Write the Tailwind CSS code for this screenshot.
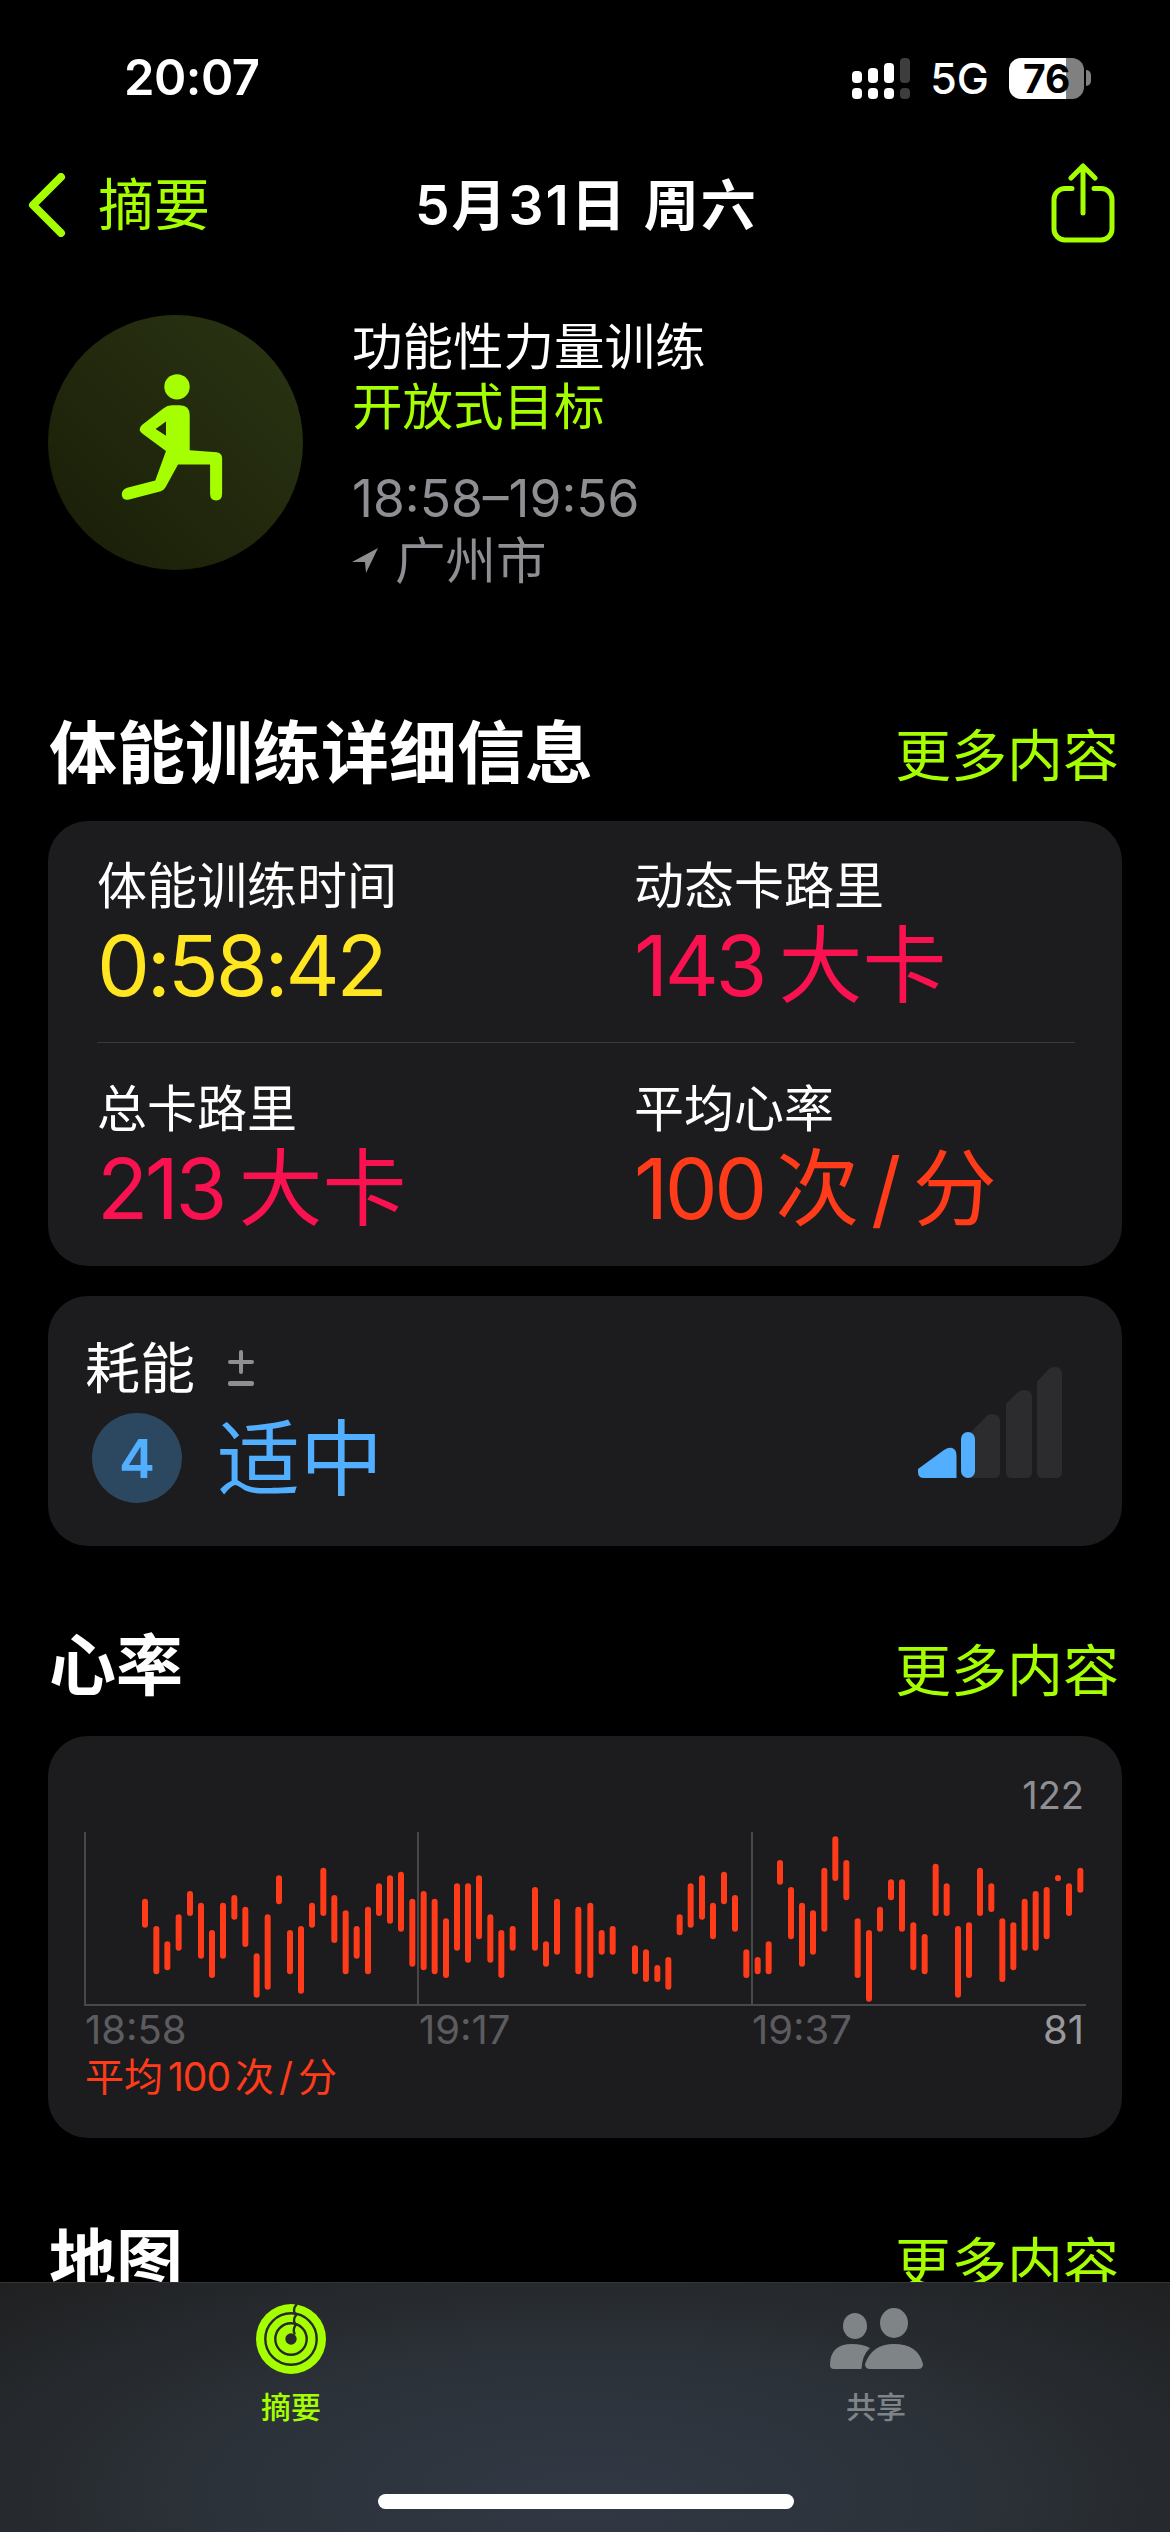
<!DOCTYPE html>
<html lang="zh-CN">
<head>
    <meta charset="UTF-8">
    <meta name="viewport" content="width=device-width, initial-scale=1.0">
    <title>体能训练详细信息</title>
    <script src="https://cdn.jsdelivr.net/npm/@tailwindcss/browser@4"></script>
</head>
<body class="bg-black">
    <div class="relative w-[1170px] h-[2532px] overflow-hidden bg-black text-white font-['Inter','Noto_Sans_CJK_SC',sans-serif]">

        <!-- Status bar -->
        <div class="h-[156px] flex items-center justify-between pl-[124px] pr-[79px]">
            <span class="text-[49px] font-semibold tracking-[-0.5px]">20:07</span>
            <div class="flex items-center">
                <svg width="58" height="41" viewBox="856 57 58 41">
                    <g fill="#fff">
                        <rect x="856" y="70" width="10" height="12" rx="4"/><rect x="856" y="87" width="10" height="11" rx="4"/>
                        <rect x="872" y="67" width="10" height="15" rx="4"/><rect x="872" y="87" width="10" height="11" rx="4"/>
                        <rect x="888" y="62" width="10" height="20" rx="4"/><rect x="888" y="87" width="10" height="11" rx="4"/>
                    </g>
                    <g fill="#3d3d3d">
                        <rect x="904" y="57" width="10" height="25" rx="4"/><rect x="904" y="87" width="10" height="11" rx="4"/>
                    </g>
                </svg>
                <span class="ml-[20px] text-[43px] font-medium leading-none">5G</span>
                <div class="relative ml-[20px] w-[75px] h-[41px] rounded-[12px] bg-[linear-gradient(90deg,#fff_76%,#808080_76%)] text-black text-[39px] font-bold leading-[41px] pl-[14px]">76</div>
                <div class="ml-[2px] w-[5px] h-[16px] rounded-r-full bg-[#808080]"></div>
            </div>
        </div>

        <!-- Nav -->
        <div class="relative h-[98px] flex items-center justify-between pl-[28px] pr-[55px]">
            <div class="flex items-center text-[#a6ff00]">
                <svg width="38" height="64" viewBox="0 0 38 64" fill="none" stroke="#a6ff00" stroke-width="8" stroke-linecap="round" stroke-linejoin="round">
                    <path d="M33 4 L5 32 L33 60"/>
                </svg>
                <span class="ml-[32px] text-[56px] leading-none">摘要</span>
            </div>
            <div class="absolute left-[415px] top-0 h-full flex items-center text-[55px] font-semibold leading-none tracking-[2px]">5月31日 周六</div>
            <svg class="-mt-[4px]" width="64" height="80" viewBox="0 0 64 80" fill="none" stroke="#a6ff00" stroke-width="5" stroke-linecap="round" stroke-linejoin="round">
                <path d="M21 25.5 H14 a11 11 0 0 0 -11 11 V66 a11 11 0 0 0 11 11 H50 a11 11 0 0 0 11 -11 V36.5 a11 11 0 0 0 -11 -11 H43"/>
                <path d="M32 3 V50 M20 15 L32 3 L44 15"/>
            </svg>
        </div>

        <!-- Workout summary -->
        <div class="mt-[61px] ml-[48px] h-[255px] flex items-start">
            <div class="w-[255px] h-[255px] rounded-full bg-linear-to-tr from-[#191e07] to-[#2b3414] flex items-center justify-center">
                <svg width="255" height="255" viewBox="25 45 763 763">
                    <circle cx="411" cy="260" r="38" fill="#a6ff00"/>
                    <path fill="#a6ff00" fill-rule="evenodd" d="M395 315 H420 Q449 315 449 345 V450 L530 456 Q546 458 546 475 V580 Q546 600 528 600 Q510 600 510 580 V492 H414 L378 558 Q372 570 360 573 L268 597 Q250 602 246 585 Q244 568 262 562 L346 540 L378 452 L308 400 Q292 388 306 374 L370 325 Q382 315 395 315 Z M378 364 L347 386 L378 406 Z"/>
                </svg>
            </div>
            <div class="ml-[49px] pt-[2px] text-[50.5px] leading-[60px]">
                <div>功能性力量训练</div>
                <div class="text-[#a6ff00]">开放式目标</div>
                <div class="mt-[31px] text-[#8e8e93] text-[51.5px] leading-[61px]">18:58–19:56</div>
                <div class="mt-[1px] flex items-center text-[#8e8e93] leading-[61px]">
                    <svg width="26" height="26" viewBox="0 0 26 26" fill="#8e8e93"><path d="M26 0 L0 14 H13 L14 25 Z"/></svg>
                    <span class="ml-[17px]">广州市</span>
                </div>
            </div>
        </div>

        <!-- 体能训练详细信息 -->
        <div class="mt-[133px] h-[100px] flex items-center justify-between pl-[49px] pr-[51px]">
            <h2 class="text-[68px] font-bold">体能训练详细信息</h2>
            <span class="text-[56px] text-[#a6ff00] mt-[6px]">更多内容</span>
        </div>

        <div class="mt-[18px] mx-[48px] h-[445px] rounded-[40px] bg-[#1c1c1e] pl-[49px] pr-[47px] pt-[35px]">
            <div class="grid grid-cols-[537px_1fr] h-[186px]">
                <div>
                    <div class="text-[50px] leading-[60px]">体能训练时间</div>
                    <div class="text-[84px] leading-[100px] text-[#ffe620] tracking-[-3.2px]">0:58:42</div>
                </div>
                <div>
                    <div class="text-[50px] leading-[60px]">动态卡路里</div>
                    <div class="text-[84px] leading-[100px] text-[#fa114f] [word-spacing:-9px]"><span class="tracking-[-3.5px]">143</span> 大卡</div>
                </div>
            </div>
            <div class="h-px bg-[#3a3a3c]"></div>
            <div class="grid grid-cols-[537px_1fr] pt-[36px]">
                <div>
                    <div class="text-[50px] leading-[60px]">总卡路里</div>
                    <div class="text-[84px] leading-[100px] text-[#fa114f] [word-spacing:-9px]"><span class="tracking-[-3.5px]">213</span> 大卡</div>
                </div>
                <div>
                    <div class="text-[50px] leading-[60px]">平均心率</div>
                    <div class="text-[84px] leading-[100px] text-[#ff3b1a] [word-spacing:-12px]"><span class="tracking-[-3.5px]">100</span> 次 / 分</div>
                </div>
            </div>
        </div>

        <!-- 耗能 -->
        <div class="mt-[30px] mx-[48px] h-[250px] rounded-[40px] bg-[#1c1c1e] flex items-start justify-between pl-[37px] pr-[60px] pt-[42px]">
            <div>
                <div class="flex items-center h-[60px]">
                    <span class="text-[55px] leading-[60px]">耗能</span>
                    <svg class="ml-[32px]" width="28" height="36" viewBox="0 0 28 36" fill="#8e8e93">
                        <rect x="12" y="0" width="4" height="24" rx="2"/>
                        <rect x="1" y="10" width="26" height="4" rx="2"/>
                        <rect x="1" y="31" width="26" height="5" rx="2"/>
                    </svg>
                </div>
                <div class="mt-[15px] ml-[7px] flex items-center">
                    <div class="w-[90px] h-[90px] rounded-full bg-[#2c4760] flex items-center justify-center text-[54px] font-semibold text-[#52aeff]">4</div>
                    <span class="ml-[35px] mt-[3px] text-[83px] leading-none text-[#52aeff]">适中</span>
                </div>
            </div>
            <svg class="mt-[29px]" width="144" height="111" viewBox="918 1366 144 111">
                <g fill="#2c2c2e">
                    <path d="M1037 1381 L1047 1370 Q1050 1366 1055 1366 Q1062 1366 1062 1373 V1471 Q1062 1477 1056 1477 H1043 Q1037 1477 1037 1471 Z"/>
                    <path d="M1006 1403 L1017 1392 Q1020 1389 1024 1389 Q1032 1389 1032 1396 V1471 Q1032 1477 1026 1477 H1012 Q1006 1477 1006 1471 Z"/>
                    <path d="M966 1436 L985 1417 Q988 1413 992 1413 Q1000 1413 1000 1420 V1471 Q1000 1477 994 1477 H966 Z"/>
                </g>
                <g fill="#52aeff">
                    <rect x="961" y="1431" width="14" height="46" rx="7"/>
                    <path d="M918 1468 L944 1449 Q950 1445 954 1448 Q956.5 1450 956.5 1455 V1477 H924 Q918 1477 918 1471 Z"/>
                </g>
            </svg>
        </div>

        <!-- 心率 -->
        <div class="mt-[70px] h-[100px] flex items-center justify-between pl-[49px] pr-[51px]">
            <h2 class="text-[67px] font-bold">心率</h2>
            <span class="text-[56px] text-[#a6ff00] mt-[10px]">更多内容</span>
        </div>

        <div class="mt-[20px] mx-[48px] h-[402px] rounded-[40px] bg-[#1c1c1e] pl-[36px] pr-[38px] pt-[40px]">
            <div class="text-right text-[38px] leading-[38px] text-[#8e8e93]">122</div>
            <svg class="mt-[15px] block" width="1006" height="178" viewBox="84 1828 1006 178">
                <g stroke="#48484a" fill="none">
                    <path stroke-width="2" d="M85 1831 V2004 M418 1831 V2004 M752 1831 V2004"/>
                    <path stroke-width="2" d="M84 2004 H1086"/>
                </g>
                <g transform="translate(60 1800) scale(0.33333)" fill="none" stroke="#ff3b1a" stroke-width="18" stroke-linecap="round">
                    <path d="M255 302V371 M289 384V511 M322 430V499 M356 349V440 M390 279V336 M423 314V464 M456 396V522 M489 314V464 M523 291V347 M556 326V429 M590 466V581 M623 349V557 M657 232V301 M690 396V511 M723 384V569 M756 314V371 M790 209V336 M823 291V417 M857 337V511 M890 384V464 M924 326V511 M957 256V336 M990 232V359 M1023 221V383 M1057 302V488 M1091 279V499 M1124 302V511 M1158 361V522 M1191 256V440 M1224 256V476 M1257 232V406 M1291 349V476 M1324 396V522 M1358 384V440 M1425 267V440 M1458 430V488 M1491 302V452 M1555 326V511"/>
                </g>
                <g transform="translate(580 1800) scale(0.33333)" fill="none" stroke="#ff3b1a" stroke-width="18" stroke-linecap="round">
                    <path d="M31 314V522 M65 396V452 M98 384V452 M165 442V511 M198 454V534 M232 501V534 M265 477V557 M299 349V394 M332 256V371 M366 232V347 M399 314V406 M432 221V301 M465 291V383 M499 454V522 M533 477V511 M566 430V511 M600 186V242 M633 267V406 M666 314V488 M699 337V452 M733 209V383 M766 115V231 M799 186V289 M833 361V522 M867 396V593 M900 326V383 M933 244V289 M966 244V383 M1000 373V499 M1034 408V511 M1067 197V336 M1100 256V336 M1134 384V581 M1167 373V522 M1200 209V336 M1234 256V324 M1267 361V534 M1300 373V499 M1334 302V440 M1367 279V440 M1400 267V406 M1434 231V232 M1467 256V336 M1501 209V266"/>
                </g>
            </svg>
            <div class="mt-[4px] pl-[1px] flex text-[40px] leading-[38px] text-[#5c5c60]">
                <span class="w-[334px]">18:58</span>
                <span class="w-[333px]">19:17</span>
                <span>19:37</span>
                <span class="ml-auto text-[#98989d]">81</span>
            </div>
            <div class="mt-[6px] pl-[1px] text-[39px] leading-[44px] text-[#ff3b1a] [word-spacing:-6px]">平均 <span class="tracking-[-1px]">100</span> 次 / 分</div>
        </div>

        <!-- 地图 -->
        <div class="mt-[73px] h-[100px] flex items-center justify-between pl-[49px] pr-[51px]">
            <h2 class="text-[67px] font-bold">地图</h2>
            <span class="text-[56px] text-[#a6ff00] mt-[6px]">更多内容</span>
        </div>

        <!-- Tab bar -->
        <div class="absolute left-0 right-0 bottom-0 h-[250px] border-t border-[#333537] bg-[radial-gradient(ellipse_at_50%_85%,#313844_0%,#2c3239_45%,#1f2021_100%)]">
            <div class="absolute left-[181px] top-[21px] w-[220px] flex flex-col items-center text-[#a6ff00]">
                <svg width="70" height="70" viewBox="0 0 70 70" fill="none">
                    <circle cx="35" cy="35" r="35" fill="#a6ff00"/>
                    <g stroke="#262a2c" stroke-width="2.4" stroke-linecap="round">
                        <circle cx="35" cy="35" r="25.7"/>
                        <circle cx="35" cy="35" r="15.7"/>
                        <path d="M40.5 0.5 Q36.5 5 39 9.8 M40.5 10.5 Q36.5 15 39 19.8 M40 20.5 Q36.5 25 38.5 29.5"/>
                    </g>
                    <circle cx="35" cy="35" r="5.7" fill="#262a2c"/>
                </svg>
                <span class="mt-[17px] text-[30px] leading-[32px] font-medium">摘要</span>
            </div>
            <div class="absolute left-[766px] top-[21px] w-[220px] flex flex-col items-center text-[#7f8487]">
                <svg width="93" height="70" viewBox="830 2304 93 70" fill="#7f8487">
                    <ellipse cx="855" cy="2326" rx="12" ry="13"/>
                    <ellipse cx="894" cy="2323" rx="14" ry="15"/>
                    <path d="M830 2365 Q830 2344 852 2344 Q863 2344 870 2348 Q862 2355 861.5 2369 H834 Q830 2369 830 2365 Z"/>
                    <path d="M865 2364 Q872 2344 894 2344 Q918 2344 923 2364 Q923 2369 918 2369 H870 Q865 2369 865 2364 Z"/>
                </svg>
                <span class="mt-[17px] text-[30px] leading-[32px] font-medium">共享</span>
            </div>
            <div class="absolute left-[378px] top-[211px] w-[416px] h-[15px] rounded-full bg-white"></div>
        </div>
    </div>
</body>
</html>
